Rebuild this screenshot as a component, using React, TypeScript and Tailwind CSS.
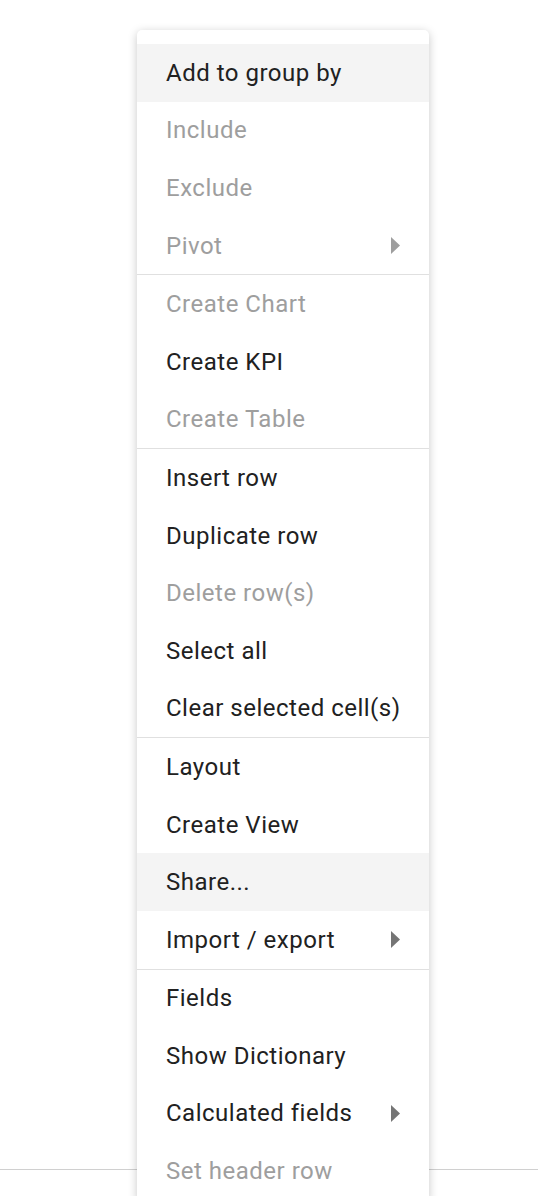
import React from "react";

type Item = { label: string; disabled?: boolean; hover?: boolean; sub?: boolean };

const groups: Item[][] = [
  [
    { label: "Add to group by", hover: true },
    { label: "Include", disabled: true },
    { label: "Exclude", disabled: true },
    { label: "Pivot", disabled: true, sub: true },
  ],
  [
    { label: "Create Chart", disabled: true },
    { label: "Create KPI" },
    { label: "Create Table", disabled: true },
  ],
  [
    { label: "Insert row" },
    { label: "Duplicate row" },
    { label: "Delete row(s)", disabled: true },
    { label: "Select all" },
    { label: "Clear selected cell(s)" },
  ],
  [
    { label: "Layout" },
    { label: "Create View" },
    { label: "Share...", hover: true },
    { label: "Import / export", sub: true },
  ],
  [
    { label: "Fields" },
    { label: "Show Dictionary" },
    { label: "Calculated fields", sub: true },
    { label: "Set header row", disabled: true },
  ],
];

function Row({ item }: { item: Item }) {
  return (
    <div
      className={
        "h-[57.6px] flex items-center pl-[29px] pr-[28px] text-[24px] tracking-[0.5px] " +
        (item.hover ? "bg-[#f4f4f4] " : "") +
        (item.disabled ? "text-[#9e9e9e]" : "text-[#212121]")
      }
    >
      <span className="flex-1 whitespace-nowrap">{item.label}</span>
      {item.sub && (
        <svg width="10" height="17" viewBox="0 0 10 17">
          <polygon points="0,0 9,8.5 0,17" fill={item.disabled ? "#9e9e9e" : "#757575"} />
        </svg>
      )}
    </div>
  );
}

export default function App() {
  return (
    <div
      className="relative w-[538px] h-[1196px] bg-white overflow-hidden"
      style={{ fontFamily: "Roboto, 'Noto Sans', sans-serif" }}
    >
      <div className="absolute left-0 right-0 top-[1169px] h-px bg-[#d0d0d0]" />
      <div className="absolute left-[137px] top-[30px] w-[292px] bg-white rounded-t-[5px] pt-[14px] shadow-[0_2px_10px_rgba(0,0,0,0.22)]">
        {groups.map((g, i) => (
          <div key={i} className={i > 0 ? "border-t border-[#e0e0e0]" : ""}>
            {g.map((it) => (
              <Row key={it.label} item={it} />
            ))}
          </div>
        ))}
      </div>
    </div>
  );
}
